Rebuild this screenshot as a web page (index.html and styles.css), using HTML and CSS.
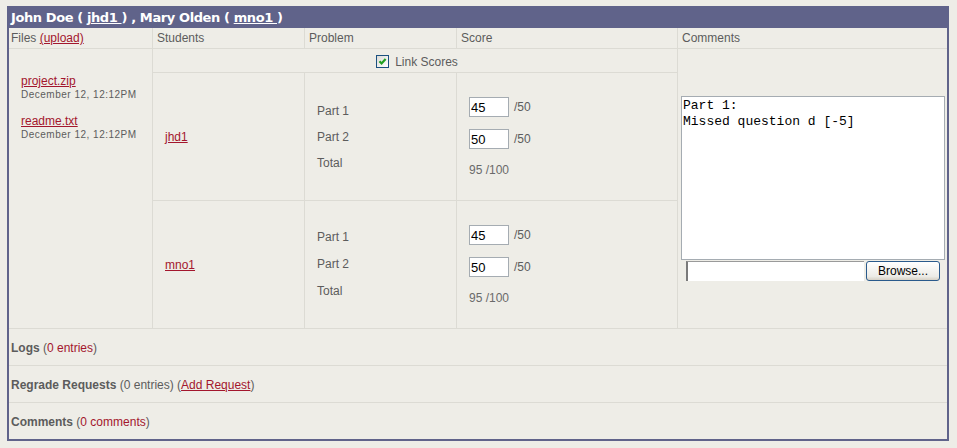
FILE: index.html
```html
<!DOCTYPE html>
<html>
<head>
<meta charset="utf-8">
<link rel="stylesheet" href="styles.css">
</head>
<body>
<div class="frame">
  <div class="title">John Doe ( <a href="#">jhd1 </a>) , Mary Olden ( <a href="#">mno1 </a>)</div>
  <div class="grid">
    <div class="cell head c1">Files <a href="#">(upload)</a></div>
    <div class="cell head">Students</div>
    <div class="cell head">Problem</div>
    <div class="cell head">Score</div>
    <div class="cell head last">Comments</div>

    <div class="cell files">
      <div class="file"><a href="#">project.zip</a><div class="date">December 12, 12:12PM</div></div>
      <div class="file"><a href="#">readme.txt</a><div class="date">December 12, 12:12PM</div></div>
    </div>
    <div class="cell link-row">
      <span class="check"><svg width="11" height="11" viewBox="0 0 11 11"><path d="M2.5 5.2 L4.6 7.4 L8.6 3" fill="none" stroke="#21a121" stroke-width="2.2"/></svg></span>
      <span>Link Scores</span>
    </div>
    <div class="cell comments last">
      <textarea class="notes">Part 1:
Missed question d [-5]</textarea>
      <div class="upload">
        <span class="filefield"></span>
        <button class="browse">Browse...</button>
      </div>
    </div>

    <div class="cell student"><a href="#">jhd1</a></div>
    <div class="cell problem"><div>Part 1</div><div>Part 2</div><div>Total</div></div>
    <div class="cell score">
      <div class="srow"><input class="sin" value="45"> <span>/50</span></div>
      <div class="srow"><input class="sin" value="50"> <span>/50</span></div>
      <div class="total">95 /100</div>
    </div>

    <div class="cell student row4"><a href="#">mno1 </a></div>
    <div class="cell problem row4 p2"><div>Part 1</div><div>Part 2</div><div>Total</div></div>
    <div class="cell score row4">
      <div class="srow"><input class="sin" value="45"> <span>/50</span></div>
      <div class="srow"><input class="sin" value="50"> <span>/50</span></div>
      <div class="total">95 /100</div>
    </div>
  </div>
  <div class="section"><b>Logs</b> (<a class="plain" href="#">0 entries</a>)</div>
  <div class="section"><b>Regrade Requests</b> (0 entries) (<a href="#">Add Request</a>)</div>
  <div class="section lastsec"><b>Comments</b> (<a class="plain" href="#">0 comments</a>)</div>
</div>
</body>
</html>
```

FILE: styles.css
```css
html, body {
  margin: 0;
  padding: 0;
  background: #eeede7;
}
body {
  font-family: "Liberation Sans", Arial, sans-serif;
  font-size: 12px;
  color: #5c5c5c;
}
a {
  color: #a3162d;
}
a.plain {
  text-decoration: none;
}
.frame {
  margin: 6px 0 0 7px;
  width: 938px;
  border: 2px solid #60638a;
  border-top: none;
  background: #eeede7;
}
.title {
  background: #60638a;
  height: 22px;
  line-height: 23px;
  color: #fff;
  font-family: "DejaVu Sans", Verdana, sans-serif;
  font-weight: bold;
  font-size: 13px;
  letter-spacing: -0.4px;
  padding-left: 2px;
  box-sizing: border-box;
}
.title a {
  color: #fff;
}
.grid {
  display: grid;
  grid-template-columns: 144px 152px 152px 221px 269px;
  grid-template-rows: 21px 24px 128px 128px;
}
.cell {
  box-sizing: border-box;
  border-right: 1px solid #dcdbd4;
  border-bottom: 1px solid #dcdbd4;
}
.cell.last {
  border-right: none;
}
.head {
  padding: 0 4px;
  line-height: 21px;
  white-space: nowrap;
}
.head.c1 {
  padding-left: 2px;
}
.files {
  grid-row: 2 / 5;
  grid-column: 1;
  padding: 25px 0 0 12px;
}
.file {
  margin-bottom: 13px;
}
.file a {
  display: block;
  line-height: 14px;
}
.date {
  font-size: 10px;
  line-height: 13px;
  letter-spacing: 0.5px;
  color: #5c5c5c;
}
.link-row {
  grid-column: 2 / 5;
  grid-row: 2;
  display: flex;
  align-items: center;
  justify-content: center;
  gap: 6px;
  padding-left: 4px;
  padding-top: 2px;
}
.check {
  width: 13px;
  height: 13px;
  box-sizing: border-box;
  border: 1px solid #1c5180;
  background: linear-gradient(135deg, #dcdcd7, #ffffff);
  display: flex;
  align-items: center;
  justify-content: center;
}
.check svg {
  display: block;
}
.comments {
  grid-column: 5;
  grid-row: 2 / 5;
  display: flex;
  flex-direction: column;
  align-items: center;
  justify-content: center;
  padding-left: 1px;
}
.notes {
  width: 264px;
  height: 164px;
  box-sizing: border-box;
  border: 1px solid #a5acb2;
  background: #fff;
  font-family: "Liberation Mono", "Courier New", monospace;
  font-size: 13px;
  line-height: 16px;
  color: #000;
  padding: 1px 1px;
  margin: 0;
  resize: none;
  display: block;
  overflow: hidden;
}
.upload {
  display: flex;
  align-items: flex-start;
  gap: 2px;
  height: 20px;
  margin-top: 1px;
}
.filefield {
  display: block;
  width: 178px;
  height: 20px;
  box-sizing: border-box;
  background: #fff;
  border-left: 2px solid #7a7a7a;
  border-top: 1px solid #9a9a9a;
}
.browse {
  width: 74px;
  height: 20px;
  box-sizing: border-box;
  border: 1px solid #2a5a8c;
  border-radius: 3px;
  background: linear-gradient(#ffffff, #ecebe6 80%, #d6d0c5);
  font-family: "Liberation Sans", Arial, sans-serif;
  font-size: 12px;
  color: #000;
  padding: 0;
  margin: 0;
}
.student {
  grid-column: 2;
  display: flex;
  align-items: center;
  padding-left: 12px;
  padding-top: 1px;
}
.problem {
  grid-column: 3;
  display: flex;
  flex-direction: column;
  justify-content: center;
  padding-left: 12px;
  line-height: 26px;
}
.problem.p2 {
  line-height: 27px;
}
.score {
  grid-column: 4;
  display: flex;
  flex-direction: column;
  justify-content: center;
  padding-left: 12px;
  padding-top: 1px;
}
.row4 {
  grid-row: 4;
}
.srow {
  display: flex;
  align-items: center;
  gap: 5px;
  height: 20px;
  margin-bottom: 12px;
}
.sin {
  width: 40px;
  height: 20px;
  box-sizing: border-box;
  border: 1px solid #a5acb2;
  background: #fff;
  font-family: "Liberation Sans", Arial, sans-serif;
  font-size: 13px;
  color: #000;
  padding: 0 1px;
  margin: 0;
}
.total {
  margin-top: 2px;
  line-height: 14px;
  color: #6a6a6a;
}
.section {
  height: 37px;
  line-height: 38px;
  box-sizing: border-box;
  border-bottom: 1px solid #dcdbd4;
  padding-left: 2px;
}
.section.lastsec {
  border-bottom: none;
  height: 36px;
}
.section b {
  color: #5c5c5c;
}
```
